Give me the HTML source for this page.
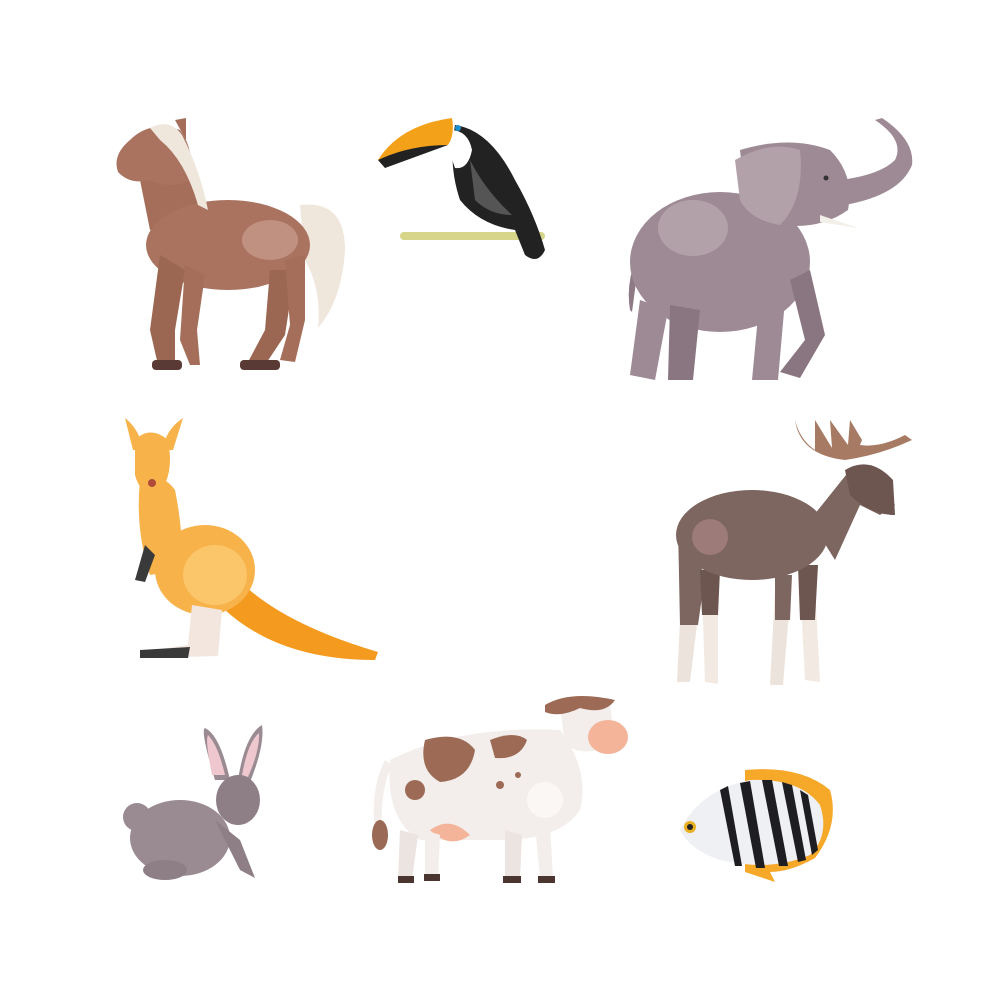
<!DOCTYPE html>
<html><head><meta charset="utf-8"><style>html,body{margin:0;padding:0;background:#fff}svg{display:block}</style></head>
<body>
<svg width="1000" height="991" viewBox="0 0 1000 991" xmlns="http://www.w3.org/2000/svg">
<!-- Horse -->
<g>
<path d="M300 205 Q345 200 345 250 Q342 300 318 328 Q322 290 305 260Z" fill="#efe6dc"/>
<path d="M170 150 Q200 175 205 215 L150 230 L140 180Z" fill="#a46e5a"/>
<ellipse cx="228" cy="245" rx="82" ry="45" fill="#a97360"/>
<ellipse cx="270" cy="240" rx="28" ry="20" fill="#c09080"/>
<path d="M160 255 L150 330 L158 365 L175 365 L175 330 L185 270Z" fill="#9b6652"/>
<path d="M185 265 L180 340 L190 365 L200 365 L197 330 L205 275Z" fill="#a46e5a"/>
<path d="M270 270 L265 330 L248 362 L265 365 L285 335 L295 270Z" fill="#9b6652"/>
<path d="M285 260 L290 325 L280 360 L295 362 L305 320 L305 255Z" fill="#a46e5a"/>
<path d="M130 140 Q150 120 180 130 Q195 150 190 180 Q170 190 150 180 Q130 185 118 172 Q112 155 130 140Z" fill="#a97360"/>
<path d="M175 120 L186 118 L186 140Z" fill="#a46e5a"/>
<path d="M150 128 Q170 118 182 135 Q200 170 208 210 L198 205 Q185 160 160 140Z" fill="#efe6dc"/>
<rect x="152" y="360" width="30" height="10" rx="4" fill="#5a3a34"/><rect x="240" y="360" width="40" height="10" rx="4" fill="#5a3a34"/>
</g>
<!-- Toucan -->
<g>
<rect x="400" y="232" width="145" height="8" rx="4" fill="#d6d58a"/>
<path d="M455 125 Q490 130 515 180 Q535 215 545 250 Q538 265 525 255 L515 230 Q480 225 460 200 Q448 165 455 125Z" fill="#222"/>
<path d="M470 160 Q485 190 512 215 Q490 215 475 200Z" fill="#555"/>
<path d="M450 130 Q468 130 472 150 Q468 170 455 168 Q448 150 450 130Z" fill="#fff"/>
<path d="M378 160 Q400 125 452 118 Q455 135 448 145 Q420 145 385 168Z" fill="#f4a11a"/>
<path d="M378 160 Q410 145 448 145 L385 168Z" fill="#222"/>
<circle cx="458" cy="128" r="3" fill="#1a8fcf"/>
</g>
<!-- Elephant -->
<g>
<path d="M630 310 Q625 280 640 250 Q635 290 632 312Z" fill="#8e7a84"/>
<ellipse cx="720" cy="262" rx="90" ry="70" fill="#9e8a94"/>
<ellipse cx="693" cy="228" rx="35" ry="28" fill="#b3a1aa"/>
<path d="M640 300 L630 375 L655 380 L668 310Z" fill="#9e8a94"/>
<path d="M670 305 L668 380 L693 380 L700 310Z" fill="#8a7680"/>
<path d="M760 295 L752 380 L778 380 L785 300Z" fill="#9e8a94"/>
<path d="M790 280 L805 340 L780 372 L800 378 L825 335 L810 270Z" fill="#8a7680"/>
<path d="M740 150 Q790 135 830 150 Q855 175 848 210 Q820 230 780 225 Q745 210 740 150Z" fill="#9e8a94"/>
<path d="M840 180 Q880 175 895 160 Q905 140 875 120 L882 118 Q915 140 912 165 Q900 195 845 205Z" fill="#9e8a94"/>
<path d="M735 160 Q770 140 800 150 Q805 200 780 225 Q750 220 740 200Z" fill="#b3a1aa"/>
<path d="M820 215 L858 228 L820 222Z" fill="#f2eee8"/>
<circle cx="826" cy="178" r="2.5" fill="#333"/>
</g>
<!-- Kangaroo -->
<g>
<path d="M230 570 Q270 620 378 652 L375 660 Q280 660 225 610Z" fill="#f49a1e"/>
<ellipse cx="205" cy="570" rx="50" ry="45" fill="#f7b24a"/>
<ellipse cx="215" cy="575" rx="32" ry="30" fill="#fbc56a"/>
<path d="M140 480 Q160 470 175 490 Q185 540 180 570 L150 575 Q135 530 140 480Z" fill="#f7b24a"/>
<path d="M135 440 Q150 425 168 440 Q175 475 158 495 Q140 495 135 475Z" fill="#f7b24a"/>
<path d="M125 418 Q140 430 143 450 L133 450Z" fill="#f7b24a"/>
<path d="M183 418 Q165 430 163 450 L173 450Z" fill="#f7b24a"/>
<path d="M192 605 L188 645 L140 652 L145 658 L218 656 L222 610Z" fill="#f2e6de"/>
<path d="M140 650 L190 647 L188 658 L140 658Z" fill="#3a3a3a"/>
<path d="M145 545 L135 580 L145 582 L155 555Z" fill="#3a3a3a"/>
<circle cx="152" cy="483" r="4" fill="#b04a3a"/>
</g>
<!-- Moose -->
<g>
<path d="M795 420 Q800 455 845 460 Q880 455 912 440 L905 435 Q880 448 860 445 L870 420 L862 440 L850 420 L848 445 L830 420 L832 448 L815 420 L815 450 Q800 440 795 420Z" fill="#a77a63"/>
<path d="M682 580 L677 682 L690 682 L700 600Z" fill="#ece4dc"/>
<path d="M702 590 L705 682 L718 684 L718 590Z" fill="#f2eae2"/>
<path d="M775 590 L770 685 L783 685 L790 600Z" fill="#ece4dc"/>
<path d="M800 585 L805 680 L820 682 L815 585Z" fill="#f2eae2"/>
<path d="M678 525 L680 625 L698 625 L705 575Z" fill="#7d6560"/>
<path d="M700 570 L702 615 L718 615 L720 570Z" fill="#6e5650"/>
<path d="M775 575 L775 620 L790 620 L792 575Z" fill="#7d6560"/>
<path d="M798 565 L800 620 L815 620 L818 565Z" fill="#6e5650"/>
<ellipse cx="752" cy="535" rx="76" ry="45" fill="#7d6560"/>
<circle cx="710" cy="537" r="18" fill="#9c7b78"/>
<path d="M810 520 L850 470 L880 480 L895 505 L880 515 L860 505 L835 560Z" fill="#7d6560"/>
<path d="M845 470 Q870 455 893 480 L895 515 Q870 515 850 495Z" fill="#6e5650"/>
</g>
<!-- Rabbit -->
<g>
<path d="M215 780 Q200 730 205 728 Q220 735 230 780Z" fill="#9a8a92"/><path d="M212 775 Q205 740 208 735 Q218 745 225 775Z" fill="#efc8cf"/>
<path d="M238 780 Q245 735 262 725 Q265 745 250 782Z" fill="#9a8a92"/><path d="M242 775 Q248 742 259 733 Q260 750 248 777Z" fill="#efc8cf"/>
<circle cx="137" cy="817" r="14" fill="#9a8a92"/>
<ellipse cx="180" cy="838" rx="50" ry="38" fill="#9a8a92"/>
<ellipse cx="238" cy="800" rx="22" ry="25" fill="#8e7e86"/>
<path d="M215 820 L240 870 L255 878 L240 840Z" fill="#8e7e86"/>
<ellipse cx="165" cy="870" rx="22" ry="10" fill="#8e7e86"/>
</g>
<!-- Cow -->
<g>
<path d="M385 760 Q370 790 375 830 L382 830 Q380 790 392 765Z" fill="#f3eeeb"/>
<ellipse cx="380" cy="835" rx="8" ry="15" fill="#9a6a56"/>
<path d="M390 760 Q460 725 560 730 Q590 770 580 810 Q560 840 500 840 L420 840 Q385 820 390 760Z" fill="#f3eeeb"/>
<path d="M425 740 Q460 730 475 750 Q470 780 440 782 Q418 770 425 740Z" fill="#9c6a55"/>
<path d="M490 740 Q515 730 527 740 Q520 760 495 758Z" fill="#9c6a55"/>
<circle cx="415" cy="790" r="10" fill="#9c6a55"/><circle cx="500" cy="785" r="4" fill="#9c6a55"/><circle cx="518" cy="775" r="3" fill="#9c6a55"/>
<circle cx="545" cy="800" r="18" fill="#fbf7f5"/>
<path d="M430 830 Q450 815 470 835 Q450 850 430 830Z" fill="#f4b49a"/>
<path d="M400 830 L398 880 L412 880 L418 835Z" fill="#ece4e0"/><path d="M425 830 L425 878 L438 878 L440 835Z" fill="#f3eeeb"/>
<path d="M505 830 L505 880 L520 880 L522 835Z" fill="#ece4e0"/><path d="M535 825 L540 878 L553 878 L550 825Z" fill="#f3eeeb"/>
<rect x="398" y="876" width="16" height="7" fill="#4a3530"/><rect x="424" y="874" width="16" height="7" fill="#4a3530"/><rect x="503" y="876" width="18" height="7" fill="#4a3530"/><rect x="538" y="876" width="17" height="7" fill="#4a3530"/>
<path d="M560 705 Q590 690 610 705 L615 740 Q590 760 565 745Z" fill="#f3eeeb"/>
<path d="M545 705 Q570 690 615 700 Q605 715 580 708 Q560 718 545 712Z" fill="#9c6a55"/>
<ellipse cx="608" cy="737" rx="20" ry="17" fill="#f4b49a"/>
</g>
<!-- Fish -->
<g>
<path d="M745 770 Q800 765 830 790 Q840 825 815 858 Q790 872 770 872 L775 882 L745 872 Z" fill="#f6a828"/>
<path d="M680 830 Q700 790 750 780 Q800 778 820 805 Q830 835 810 855 Q770 872 720 860 Q690 850 680 830Z" fill="#eef0f4"/>
<g fill="#1e1e22">
<path d="M720 790 L728 786 L742 866 L735 866Z"/><path d="M740 783 L750 781 L765 868 L756 868Z"/>
<path d="M762 780 L772 780 L788 866 L779 866Z"/><path d="M782 782 L792 785 L806 860 L798 862Z"/><path d="M800 790 L808 795 L818 850 L812 855Z"/>
</g>
<circle cx="690" cy="827" r="6" fill="#e8b020"/><circle cx="690" cy="827" r="3" fill="#222"/>
</g>
</svg>
</body></html>
